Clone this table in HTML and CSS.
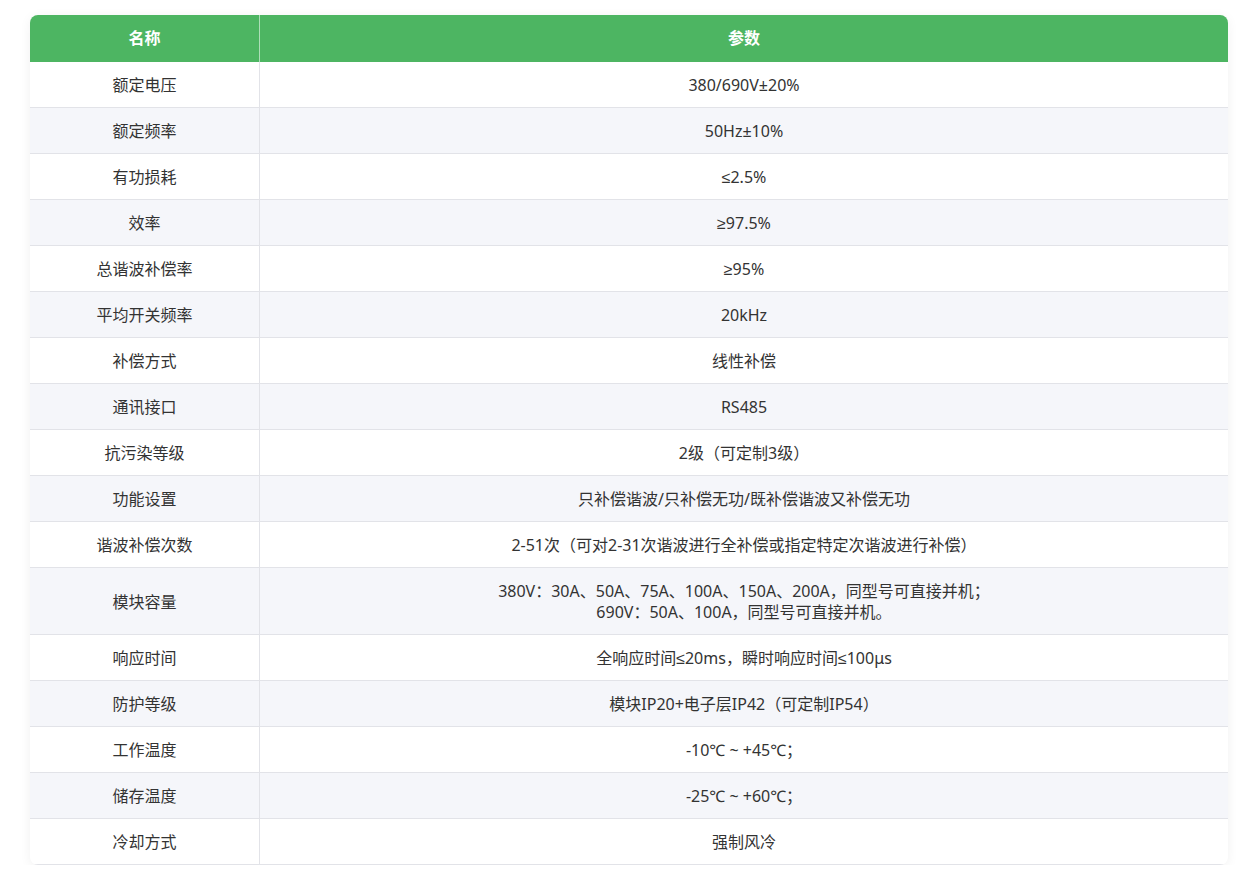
FILE: index.html
```html
<!DOCTYPE html>
<html lang="zh">
<head>
<meta charset="utf-8">
<link rel="stylesheet" href="styles.css">
</head>
<body>
<div class="wrap">
<table class="spec">
<thead>
<tr><th class="c1">名称</th><th>参数</th></tr>
</thead>
<tbody>
<tr><td class="c1">额定电压</td><td>380/690V±20%</td></tr>
<tr><td class="c1">额定频率</td><td>50Hz±10%</td></tr>
<tr><td class="c1">有功损耗</td><td><span class="sym">≤</span>2.5%</td></tr>
<tr><td class="c1">效率</td><td><span class="sym">≥</span>97.5%</td></tr>
<tr><td class="c1">总谐波补偿率</td><td><span class="sym">≥</span>95%</td></tr>
<tr><td class="c1">平均开关频率</td><td>20kHz</td></tr>
<tr><td class="c1">补偿方式</td><td>线性补偿</td></tr>
<tr><td class="c1">通讯接口</td><td>RS485</td></tr>
<tr><td class="c1">抗污染等级</td><td>2级（可定制3级）</td></tr>
<tr><td class="c1">功能设置</td><td>只补偿谐波/只补偿无功/既补偿谐波又补偿无功</td></tr>
<tr><td class="c1">谐波补偿次数</td><td>2-51次（可对2-31次谐波进行全补偿或指定特定次谐波进行补偿）</td></tr>
<tr><td class="c1">模块容量</td><td>380V：30A、50A、75A、100A、150A、200A，同型号可直接并机；<br>690V：50A、100A，同型号可直接并机。</td></tr>
<tr><td class="c1">响应时间</td><td>全响应时间<span class="sym">≤</span>20ms，瞬时响应时间<span class="sym">≤</span>100μs</td></tr>
<tr><td class="c1">防护等级</td><td>模块IP20+电子层IP42（可定制IP54）</td></tr>
<tr><td class="c1">工作温度</td><td>-10℃ ~ +45℃；</td></tr>
<tr><td class="c1">储存温度</td><td>-25℃ ~ +60℃；</td></tr>
<tr><td class="c1">冷却方式</td><td>强制风冷</td></tr>
</tbody>
</table>
</div>
</body>
</html>
```

FILE: styles.css
```css
html, body {
  margin: 0;
  padding: 0;
  background: #ffffff;
}
.wrap {
  padding: 15px 25px 0 30px;
}
.spec {
  width: 1198px;
  border-collapse: separate;
  border-spacing: 0;
  border-radius: 8px;
  overflow: hidden;
  box-shadow: 0 2px 12px rgba(0, 0, 0, 0.06);
  font-family: "Noto Sans", "Noto Sans CJK SC", sans-serif;
  font-size: 16px;
  color: #333333;
  table-layout: fixed;
}
.spec th {
  background: #4db562;
  color: #ffffff;
  font-weight: 700;
  font-size: 16px;
  height: 47px;
  box-sizing: border-box;
  padding: 0;
  line-height: 21px;
  text-align: center;
}
.spec th.c1 {
  border-right: 1px solid rgba(255, 255, 255, 0.55);
}
.spec .c1 {
  width: 230px;
}
.spec td {
  padding: 13px 10px 11px;
  height: 21px;
  line-height: 21px;
  text-align: center;
  border-bottom: 1px solid #e2e3e8;
}
.spec td.c1 {
  border-right: 1px solid #e2e3e8;
}
.spec tbody tr:nth-child(even) td {
  background: #f5f6fa;
}
.sym {
  font-family: "Liberation Sans", sans-serif;
}
```
